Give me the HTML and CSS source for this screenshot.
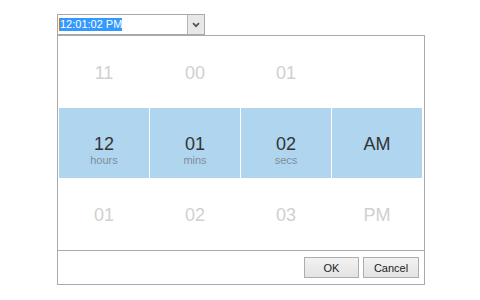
FILE: index.html
```html
<!DOCTYPE html>
<html lang="en">
<head>
    <meta charset="UTF-8">
    <meta name="viewport" content="width=device-width, initial-scale=1.0">
    <title>Time Picker</title>
    <link rel="stylesheet" href="styles.css">
</head>
<body>
    <div class="picker">
        <div class="field">
            <span class="value"><span class="selected-text">12:01:02 PM</span></span>
            <span class="toggle">
                <svg width="8" height="6" viewBox="0 0 8 6"><path d="M1 1.2 L4 4.2 L7 1.2" fill="none" stroke="#555" stroke-width="1.8"/></svg>
            </span>
        </div>

        <div class="popup">
            <div class="wheels">
                <div class="cell"><span class="num">11</span></div>
                <div class="cell"><span class="num">00</span></div>
                <div class="cell"><span class="num">01</span></div>
                <div class="cell"></div>

                <div class="cell current"><span class="num">12</span><span class="unit">hours</span></div>
                <div class="cell current"><span class="num">01</span><span class="unit">mins</span></div>
                <div class="cell current"><span class="num">02</span><span class="unit">secs</span></div>
                <div class="cell current"><span class="num">AM</span></div>

                <div class="cell"><span class="num">01</span></div>
                <div class="cell"><span class="num">02</span></div>
                <div class="cell"><span class="num">03</span></div>
                <div class="cell"><span class="num">PM</span></div>
            </div>

            <div class="actions">
                <button class="btn">OK</button>
                <button class="btn">Cancel</button>
            </div>
        </div>
    </div>
</body>
</html>
```

FILE: styles.css
```css
body {
    margin: 0;
    background: #fff;
    font-family: "Liberation Sans", Arial, sans-serif;
}

.picker {
    padding: 14px 0 0 57px;
}

/* input with dropdown toggle */
.field {
    display: flex;
    width: 148px;
    height: 21px;
    box-sizing: border-box;
    border: 1px solid #a9a9a9;
    background: #fff;
}
.value {
    flex: 1;
    display: flex;
    align-items: center;
    padding-left: 2px;
    font-size: 11px;
}
.selected-text {
    background: #3399ff;
    color: #fff;
    line-height: 13px;
    border-left: 1px solid #e0701c;
    margin-left: -1px;
}
.toggle {
    width: 16px;
    display: flex;
    align-items: center;
    justify-content: center;
    background: #e8e8e8;
    border-left: 1px solid #b5b5b5;
}

/* popup */
.popup {
    width: 368px;
    box-sizing: border-box;
    border: 1px solid #aaa;
    background: #fff;
}
.wheels {
    display: grid;
    grid-template-columns: repeat(4, 90px);
    grid-template-rows: repeat(3, 70px);
    gap: 1px;
    padding: 1px;
}
.cell {
    display: flex;
    flex-direction: column;
    align-items: center;
    justify-content: center;
    padding-top: 2px;
    box-sizing: border-box;
}
.num {
    font-size: 18px;
    line-height: 20px;
    color: #d0d0d0;
}
.unit {
    font-size: 11px;
    line-height: 13px;
    margin-bottom: -13px;
    color: #7f8d99;
}
.current {
    background: #b0d5ef;
}
.current .num {
    color: #333;
}

.actions {
    display: flex;
    justify-content: flex-end;
    gap: 4px;
    padding: 6px 5px 6px;
    border-top: 1px solid #aaa;
}
.btn {
    width: 55px;
    height: 21px;
    padding: 0;
    font-family: "Liberation Sans", Arial, sans-serif;
    font-size: 11px;
    color: #222;
    background: linear-gradient(#f2f2f2, #e3e3e3);
    border: 1px solid #adadad;
    border-radius: 0;
}
.btn + .btn {
    width: 56px;
}
```
